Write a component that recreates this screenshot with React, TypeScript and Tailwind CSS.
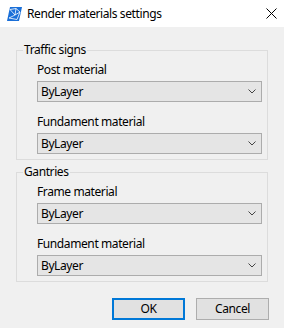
import React from "react";

const font = { fontFamily: '"Noto Sans", "Liberation Sans", sans-serif' };

function AppIcon() {
  return (
    <svg width="15" height="14" viewBox="0 0 15 14" aria-hidden>
      <polygon points="3,0 15,0 12,14 0,14" fill="#1a6fd8" />
      <polyline points="3,2.5 9,1.5 13,5 8,8 3,2.5" fill="none" stroke="#fff" strokeWidth="0.8" />
      <polyline points="8,8 2,11 10,12.5 13,5" fill="none" stroke="#fff" strokeWidth="0.8" />
      <line x1="9" y1="1.5" x2="8" y2="8" stroke="#fff" strokeWidth="0.8" />
    </svg>
  );
}

function Combo() {
  return (
    <div className="flex h-[21px] items-center justify-between border border-[#acacac] bg-[#e5e5e5] pl-[3px] pr-[5px]">
      <span>ByLayer</span>
      <svg width="8" height="5" viewBox="0 0 8 5" aria-hidden>
        <polyline points="0.5,0.5 4,4 7.5,0.5" fill="none" stroke="#444" strokeWidth="1" />
      </svg>
    </div>
  );
}

function Field({ label }: { label: string }) {
  return (
    <div className="flex flex-col">
      <div className="leading-4">{label}</div>
      <div className="mt-[3px]">
        <Combo />
      </div>
    </div>
  );
}

function Group({ title, fields }: { title: string; fields: string[] }) {
  return (
    <fieldset className="border border-[#dcdcdc]">
      <legend className="ml-[6px] px-[1px] leading-4">{title}</legend>
      <div className="flex flex-col gap-[12px] pb-[5px] pl-[20px] pr-[5px] pt-[4px]">
        {fields.map((f, i) => (
          <Field key={i} label={f} />
        ))}
      </div>
    </fieldset>
  );
}

export default function App() {
  return (
    <div
      className="flex h-[328px] w-[284px] flex-col bg-[#f0f0f0] text-[12px] tracking-[-0.4px] text-black"
      style={font}
    >
      <div className="flex h-[27px] items-center bg-white pl-[7px] pr-[7px]">
        <AppIcon />
        <span className="ml-[5px] flex-1">Render materials settings</span>
        <svg width="11" height="11" viewBox="0 0 11 11" aria-hidden>
          <line x1="0.5" y1="0.5" x2="10.5" y2="10.5" stroke="#000" strokeWidth="1" />
          <line x1="10.5" y1="0.5" x2="0.5" y2="10.5" stroke="#000" strokeWidth="1" />
        </svg>
      </div>
      <div className="flex flex-col px-[16px] pt-[15px]">
        <Group title="Traffic signs" fields={["Post material", "Fundament material"]} />
        <div className="mt-[4px]">
          <Group title="Gantries" fields={["Frame material", "Fundament material"]} />
        </div>
      </div>
      <div className="mt-[16px] flex justify-end gap-[11px] pr-[15px]">
        <button className="h-[22px] w-[73px] border-2 border-[#0078d7] bg-[#e1e1e1]">OK</button>
        <button className="h-[22px] w-[73px] border border-[#adadad] bg-[#e1e1e1]">Cancel</button>
      </div>
    </div>
  );
}
